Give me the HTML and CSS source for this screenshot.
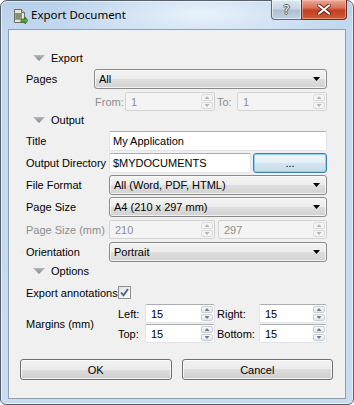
FILE: index.html
```html
<!DOCTYPE html>
<html lang="en">
    <head>
        <meta charset="UTF-8">
        <meta name="viewport" content="width=device-width, initial-scale=1.0">
        <title>Export Document</title>
        <link rel="stylesheet" href="styles.css">
    </head>

    <body>
        <div class="window">
            <div class="titlebar">
                <svg class="app-icon" width="16" height="16" viewBox="0 0 16 16">
                    <path d="M2.5 1.5h7l3 3v10h-10z" fill="#e8e6dc" stroke="#6f6f68"/>
                    <path d="M9.5 1.5v3h3" fill="#cfcdc2" stroke="#6f6f68"/>
                    <path d="M4 6h6M4 8h6M4 10h4" stroke="#8a8a80"/>
                    <rect x="3" y="5" width="7" height="7" fill="#59703e" opacity="0.55"/>
                    <path d="M9 11h4v-2l3 3.5-3 3.5v-2H9z" fill="#5ca83a" stroke="#2f6d1c" stroke-width="0.8"/>
                </svg>
                <span class="caption">Export Document</span>
                <div class="caption-buttons">
                    <div class="cap-btn help">?</div>
                    <div class="cap-btn close">
                        <svg width="14" height="11" viewBox="0 0 14 11">
                            <path d="M2 1.5l10 8M12 1.5l-10 8" stroke="#5a1a10" stroke-width="3.6" stroke-linecap="round"/>
                            <path d="M2 1.5l10 8M12 1.5l-10 8" stroke="#ffffff" stroke-width="2.2" stroke-linecap="round"/>
                        </svg>
                    </div>
                </div>
            </div>

            <div class="client">
                <div class="section"><span class="twisty"></span>Export</div>
                <div class="row">
                    <span class="lbl export-col">Pages</span>
                    <div class="combo grow">All</div>
                </div>
                <div class="row short">
                    <span class="lbl export-col"></span>
                    <span class="lbl disabled from-lbl">From:</span>
                    <div class="spin disabled w90"><span class="val">1</span><span class="arrows"><i class="up"></i><i class="down"></i></span></div>
                    <span class="lbl disabled to-lbl">To:</span>
                    <div class="spin disabled w90"><span class="val">1</span><span class="arrows"><i class="up"></i><i class="down"></i></span></div>
                </div>

                <div class="section"><span class="twisty"></span>Output</div>
                <div class="row">
                    <span class="lbl output-col">Title</span>
                    <div class="edit grow">My Application</div>
                </div>
                <div class="row">
                    <span class="lbl output-col">Output Directory</span>
                    <div class="edit dir">$MYDOCUMENTS</div>
                    <div class="button focus browse">...</div>
                </div>
                <div class="row">
                    <span class="lbl output-col">File Format</span>
                    <div class="combo grow">All (Word, PDF, HTML)</div>
                </div>
                <div class="row">
                    <span class="lbl output-col">Page Size</span>
                    <div class="combo grow">A4 (210 x 297 mm)</div>
                </div>
                <div class="row short">
                    <span class="lbl output-col disabled">Page Size (mm)</span>
                    <div class="spin disabled w106"><span class="val">210</span><span class="arrows"><i class="up"></i><i class="down"></i></span></div>
                    <div class="spin disabled grow second"><span class="val">297</span><span class="arrows"><i class="up"></i><i class="down"></i></span></div>
                </div>
                <div class="row orient">
                    <span class="lbl output-col">Orientation</span>
                    <div class="combo grow">Portrait</div>
                </div>

                <div class="section"><span class="twisty"></span>Options</div>
                <div class="row short">
                    <span class="lbl options-col">Export annotations</span>
                    <span class="check">
                        <svg width="11" height="11" viewBox="0 0 11 11">
                            <path d="M2 5.5l2.5 2.8L9 2" fill="none" stroke="#4c5f8f" stroke-width="1.8"/>
                        </svg>
                    </span>
                </div>
                <div class="margins">
                    <span class="lbl options-col">Margins (mm)</span>
                    <div class="margin-grid">
                        <span class="lbl">Left:</span>
                        <div class="spin"><span class="val">15</span><span class="arrows"><i class="up"></i><i class="down"></i></span></div>
                        <span class="lbl pad">Right:</span>
                        <div class="spin"><span class="val">15</span><span class="arrows"><i class="up"></i><i class="down"></i></span></div>
                        <span class="lbl">Top:</span>
                        <div class="spin"><span class="val">15</span><span class="arrows"><i class="up"></i><i class="down"></i></span></div>
                        <span class="lbl pad">Bottom:</span>
                        <div class="spin"><span class="val">15</span><span class="arrows"><i class="up"></i><i class="down"></i></span></div>
                    </div>
                </div>

                <div class="buttons">
                    <div class="button">OK</div>
                    <div class="button">Cancel</div>
                </div>
            </div>
        </div>
    </body>

</html>
```

FILE: styles.css
```css
* {
    margin: 0;
    padding: 0;
    box-sizing: border-box;
}

body {
    width: 354px;
    height: 405px;
    overflow: hidden;
    background: #ffffff;
    font-family: 'Liberation Sans', Arial, sans-serif;
    font-size: 11px;
    color: #000;
}

.window {
    width: 354px;
    height: 405px;
    border: 1px solid #55606d;
    border-radius: 7px 7px 6px 6px;
    background:
        radial-gradient(ellipse 150px 34px at 200px 12px, rgba(236, 244, 252, 0.95), rgba(236, 244, 252, 0)),
        linear-gradient(180deg, #b7d0ea 0, #c4d9ef 28px, #c9dcf0 100%);
    box-shadow: inset 0 0 0 1px rgba(255, 255, 255, 0.55);
}

.titlebar {
    height: 28px;
    display: flex;
    align-items: flex-start;
    padding-left: 11px;
}

.app-icon {
    margin-top: 7px;
    flex: none;
}

.caption {
    margin: 6px 0 0 3px;
    line-height: 16px;
    font-family: 'Noto Sans', 'Open Sans', sans-serif;
    font-size: 11.5px;
    color: #000;
}

.caption-buttons {
    margin-left: auto;
    margin-right: 6px;
    margin-top: -1px;
    display: flex;
}

.cap-btn {
    height: 20px;
    border: 1px solid #5d6a7a;
    border-top: none;
    display: flex;
    justify-content: center;
    align-items: center;
}

.help {
    width: 30px;
    border-radius: 0 0 0 4px;
    border-right: none;
    background: linear-gradient(180deg, #dfe8f1 0, #c8d6e4 45%, #aebfd2 55%, #bfd1e3 100%);
    color: #f2f5f8;
    font-family: 'DejaVu Sans', sans-serif;
    font-size: 13px;
    text-shadow: 1px 0 0 #4a5869, -1px 0 0 #4a5869, 0 1px 0 #4a5869, 0 -1px 0 #4a5869;
    box-shadow: inset 0 0 0 1px rgba(255, 255, 255, 0.5);
}

.close {
    width: 46px;
    border-radius: 0 0 4px 0;
    border-color: #6b2a22;
    background: linear-gradient(180deg, #e9a796 0, #d9745c 40%, #c2401f 55%, #cf5b3a 100%);
    box-shadow: inset 0 0 0 1px rgba(255, 210, 200, 0.45);
}

.client {
    margin: 0 7px;
    height: 370px;
    background: #f0f0f0;
    border: 1px solid #8fa0b4;
    padding: 19px 18px 0 17px;
}

/* section headers with the collapse arrow */
.section {
    height: 18px;
    line-height: 18px;
    display: flex;
    align-items: center;
}

.twisty {
    width: 12px;
    height: 6px;
    margin: 0 6px 0 7px;
    background: linear-gradient(180deg, #b2b8bb, #7f888d);
    clip-path: polygon(0 0, 100% 0, 50% 100%);
}

.row {
    height: 20px;
    margin-top: 2px;
    display: flex;
    align-items: stretch;
}

.row.short {
    height: 19px;
    margin-top: 3px;
}

.row.orient {
    margin-top: 3px;
}

.lbl {
    display: flex;
    align-items: center;
    white-space: nowrap;
}

.disabled {
    color: #8d8d8d;
}

.export-col {
    width: 68px;
    flex: none;
}

.output-col {
    width: 83px;
    flex: none;
}

.options-col {
    width: 92px;
    flex: none;
}

.grow {
    flex: 1;
}

.from-lbl {
    width: 31px;
    padding-left: 1px;
}

.to-lbl {
    width: 22px;
    padding-left: 2px;
}

.w90 {
    width: 90px;
    flex: none;
}

.w106 {
    width: 106px;
    flex: none;
}

.second {
    margin-left: 3px;
}

.combo {
    position: relative;
    border: 1px solid #8a8a8a;
    border-radius: 3px;
    background: linear-gradient(180deg, #f3f3f3 0, #ececec 50%, #dedede 50%, #d2d2d2 100%);
    box-shadow: inset 0 0 0 1px rgba(255, 255, 255, 0.7);
    padding-left: 4px;
    line-height: 18px;

    &::after {
        content: '';
        position: absolute;
        right: 6px;
        top: 7px;
        width: 7px;
        height: 4px;
        background: #000;
        clip-path: polygon(0 0, 100% 0, 50% 100%);
    }
}

.edit {
    background: #fff;
    border: 1px solid #dfe3ea;
    border-top-color: #abadb3;
    border-radius: 2px;
    padding-left: 3px;
    line-height: 18px;
}

.dir {
    width: 142px;
    flex: none;
}

.browse {
    margin-left: 2px;
    flex: 1;
}

.button {
    border: 1px solid #707070;
    border-radius: 3px;
    background: linear-gradient(180deg, #f2f2f2 0, #ebebeb 50%, #dddddd 50%, #cfcfcf 100%);
    box-shadow: inset 0 0 0 1px rgba(255, 255, 255, 0.75);
    display: flex;
    justify-content: center;
    align-items: center;
}

.button.focus {
    border-color: #3c7fb1;
    background: linear-gradient(180deg, #eef6fb 0, #e3eff7 50%, #d3e5f1 50%, #c6dceb 100%);
    box-shadow: inset 0 0 0 1px #8fd3f1;
}

.spin {
    display: flex;
    background: #fff;
    border: 1px solid #dfe3ea;
    border-top-color: #abadb3;
    border-radius: 2px;

    & .val {
        flex: 1;
        padding-left: 5px;
        display: flex;
        align-items: center;
    }

    & .arrows {
        width: 13px;
        padding: 1px 1px 1px 0;
        display: flex;
        flex-direction: column;
        gap: 1px;
    }

    & i {
        flex: 1;
        border: 1px solid #c9ced6;
        border-radius: 2px;
        background: linear-gradient(180deg, #f7f7f7, #e6e6e6);
        display: flex;
        justify-content: center;
        align-items: center;

        &::before {
            content: '';
            width: 5px;
            height: 3px;
            background: #6d7b8f;
        }
    }

    & .up::before {
        clip-path: polygon(50% 0, 100% 100%, 0 100%);
    }

    & .down::before {
        clip-path: polygon(0 0, 100% 0, 50% 100%);
    }

    &.disabled {
        background: #f4f4f4;
        border-color: #d3d3d3;

        & i {
            border-color: #dadada;
            background: #f4f4f4;

            &::before {
                background: #b5b5b5;
            }
        }
    }
}

.check {
    width: 13px;
    height: 13px;
    align-self: center;
    border: 1px solid #8e8f8f;
    background: linear-gradient(135deg, #e0e2e5, #fbfbfb);
    display: flex;
    justify-content: center;
    align-items: center;
}

.margins {
    margin-top: 2px;
    display: flex;
}

.margin-grid {
    display: grid;
    grid-template-columns: 27px 70px 44px 1fr;
    grid-template-rows: 19px 19px;
    row-gap: 1px;
    flex: 1;

    & .pad {
        padding-left: 2px;
    }
}

.buttons {
    margin: 16px -6px 0 -6px;
    display: flex;
    gap: 10px;

    & .button {
        flex: 1;
        height: 21px;
    }
}
```
